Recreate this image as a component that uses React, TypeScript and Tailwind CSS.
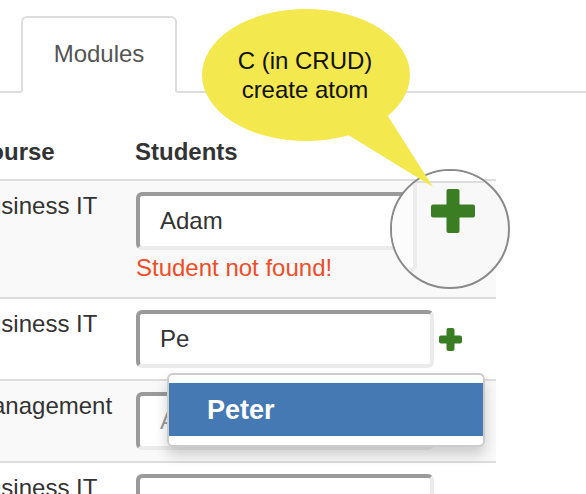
import React from "react";

function Plus({ size, bar, className }: { size: number; bar: number; className?: string }) {
  const o = (size - bar) / 2;
  return (
    <svg width={size} height={size} viewBox={`0 0 ${size} ${size}`} className={className}>
      <rect x={0} y={o} width={size} height={bar} rx={2} fill="#3a7d22" />
      <rect x={o} y={0} width={bar} height={size} rx={2} fill="#3a7d22" />
    </svg>
  );
}

function Input({ value, placeholder }: { value?: string; placeholder?: string }) {
  return (
    <div className="flex h-[58px] w-[298px] shrink-0 items-center rounded-[6px] border-[4px] border-t-[#9a9a9a] border-l-[#9a9a9a] border-r-[#ebebeb] border-b-[#ebebeb] bg-white pl-[20px]">
      {value ? (
        <span className="text-[#333]">{value}</span>
      ) : (
        <span className="text-[#9a9a9a]">{placeholder}</span>
      )}
    </div>
  );
}

function Row({
  course,
  striped,
  children,
}: {
  course: string;
  striped?: boolean;
  children: React.ReactNode;
}) {
  return (
    <div
      className={`grid grid-cols-[163px_1fr] border-b-2 border-[#dddddd] ${
        striped ? "bg-[#f9f9f9]" : "bg-white"
      }`}
    >
      <div className="pl-[8px] pt-[8px] text-[#333]">{course}</div>
      <div className="pl-[9px] pt-[11px] pb-[11px]">{children}</div>
    </div>
  );
}

export default function App() {
  return (
    <div className="relative h-[494px] w-[586px] overflow-hidden bg-white font-['Liberation_Sans',Arial,sans-serif] text-[24px] leading-[34px]">
      {/* Tabs */}
      <div className="flex border-b-2 border-[#dddddd] pl-[21px] pt-[16px]">
        <div className="-mb-[2px] flex h-[77px] w-[156px] justify-center rounded-t-[6px] border-2 border-[#dddddd] border-b-transparent bg-white pt-[19px] text-[#555]">
          Modules
        </div>
      </div>

      {/* Table */}
      <div className="ml-[-36px] w-[532px]">
        <div className="grid grid-cols-[163px_1fr] border-b-2 border-[#dddddd] pt-[42px] pb-[10px] font-bold text-[#333]">
          <div className="pl-[8px]">Course</div>
          <div className="pl-[8px]">Students</div>
        </div>

        <Row course="Business IT" striped>
          <div className="pb-[1px]">
            <Input value="Adam" />
          </div>
          <div className="mb-[1px] text-[#f04c27]">Student not found!</div>
        </Row>

        <Row course="Business IT">
          <div className="flex items-center">
            <Input value="Pe" />
            <Plus size={23} bar={8} className="ml-[5px]" />
          </div>
        </Row>

        <Row course="Management" striped>
          <Input placeholder="Add Student" />
        </Row>

        <Row course="Business IT">
          <Input placeholder="Add Student" />
        </Row>
      </div>

      {/* Magnifier circle */}
      <div className="absolute left-[390px] top-[169px] h-[120px] w-[120px] overflow-hidden rounded-full border-2 border-[#8a8a8a] bg-[#f8f8f8]">
        <div className="absolute left-0 top-0 h-[10px] w-full bg-white" />
        <div className="absolute left-0 top-[10px] h-[2px] w-full bg-[#dddddd]" />
        <div className="absolute left-0 top-[12px] h-[90px] w-[25px] rounded-br-[8px] border-r-4 border-b-4 border-[#ececec] bg-[#fcfcfc]" />
        <Plus size={44} bar={13} className="absolute left-[39px] top-[18px]" />
      </div>

      {/* Speech bubble */}
      <svg className="absolute left-[200px] top-[5px]" width="240" height="190" viewBox="0 0 240 190">
        <ellipse cx="106" cy="70" rx="104" ry="66" fill="#f3e84e" />
        <polygon points="145,128 233,182 186,108" fill="#f3e84e" />
      </svg>
      <div className="absolute left-[204px] top-[46px] w-[202px] text-center leading-[29px] text-[#111]">
        <div>C (in CRUD)</div>
        <div>create atom</div>
      </div>

      {/* Autocomplete dropdown */}
      <div className="absolute left-[167px] top-[373px] w-[318px] rounded-[6px] border-2 border-[#cccccc] bg-white pt-[8px] pb-[9px] shadow-[0_8px_14px_rgba(0,0,0,0.18)]">
        <div className="flex h-[53px] items-center bg-[#4479b3] pl-[38px] text-[27px] font-bold text-white">
          Peter
        </div>
      </div>
    </div>
  );
}
